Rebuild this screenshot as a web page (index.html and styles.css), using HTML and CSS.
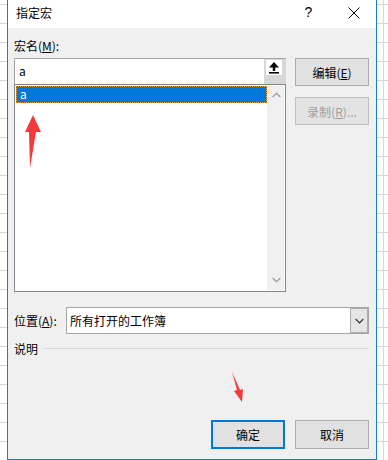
FILE: index.html
```html
<!DOCTYPE html>
<html lang="zh-CN">
<head>
  <meta charset="UTF-8">
  <meta name="viewport" content="width=device-width, initial-scale=1">
  <title>指定宏</title>
  <link rel="stylesheet" href="styles.css">
</head>
<body>
  <div class="dialog">
    <div class="titlebar">
      <span class="title">指定宏</span>
      <span class="tb-btn help">?</span>
      <span class="tb-btn close">
        <svg width="12" height="12" viewBox="0 0 12 12"><path d="M0.5 0.5L11.5 11.5M11.5 0.5L0.5 11.5" stroke="#000" stroke-width="1" fill="none"/></svg>
      </span>
    </div>

    <div class="dialog-body">
      <div class="main">
        <div class="left">
          <div class="label">宏名(<u>M</u>):</div>
          <div class="name-row">
            <div class="name-input">a</div>
            <div class="up-btn">
              <span class="up-box">
                <svg width="16" height="15" viewBox="0 0 16 15">
                  <path d="M8 2L13 7.5H9.2V11H6.8V7.5H3Z" fill="#000"/>
                  <rect x="3" y="12" width="10" height="1.6" fill="#000"/>
                </svg>
              </span>
            </div>
          </div>
          <div class="list">
            <div class="items">
              <div class="item selected">a</div>
            </div>
            <div class="scrollbar">
              <svg width="9" height="6" viewBox="0 0 9 6"><path d="M0.7 5L4.5 1.2L8.3 5" stroke="#a3a3a3" stroke-width="1.4" fill="none"/></svg>
              <svg width="9" height="6" viewBox="0 0 9 6"><path d="M0.7 1L4.5 4.8L8.3 1" stroke="#a3a3a3" stroke-width="1.4" fill="none"/></svg>
            </div>
          </div>
        </div>

        <div class="side">
          <button class="btn">编辑(<u>E</u>)</button>
          <button class="btn disabled">录制(<u>R</u>)...</button>
        </div>
      </div>

      <div class="place-row">
        <span class="place-label">位置(<u>A</u>):</span>
        <div class="select">
          <span class="select-value">所有打开的工作簿</span>
          <span class="select-arrow">
            <svg width="9" height="6" viewBox="0 0 9 6"><path d="M0.7 1L4.5 4.8L8.3 1" stroke="#333" stroke-width="1.2" fill="none"/></svg>
          </span>
        </div>
      </div>

      <div class="desc-row">
        <span>说明</span>
        <span class="rule"></span>
      </div>

      <div class="footer">
        <button class="btn default">确定</button>
        <button class="btn">取消</button>
      </div>
    </div>
  </div>

  <!-- red annotation arrows -->
  <svg class="mark mark-up" width="20" height="56" viewBox="0 0 20 56">
    <path d="M9 0L17 17H12L6 53L5 17H1Z" fill="#f43b3b"/>
  </svg>
  <svg class="mark mark-down" width="16" height="32" viewBox="0 0 16 32">
    <path d="M1 0L6 18L3 19L11 30L12 17L9 18Z" fill="#f43b3b"/>
  </svg>
</body>
</html>
```

FILE: styles.css
```css
* { margin:0; padding:0; box-sizing:border-box; }
body {
  width:388px; height:460px; overflow:hidden; position:relative;
  font-family:"Noto Sans CJK SC", "Liberation Sans", sans-serif;
  font-size:12px; color:#000;
  background:
    linear-gradient(to right, transparent 383px, #d6d6d6 383px, #d6d6d6 384px, transparent 384px),
    repeating-linear-gradient(to bottom, transparent 0, transparent 4px, #d6d6d6 4px, #d6d6d6 5px, transparent 5px, transparent 19px),
    #fff;
}
u { text-decoration:underline; text-underline-offset:1px; }

.dialog {
  margin-left:7px; width:370px; height:460px;
  border:1px solid #1f7bd3; border-top:none;
  background:#f0f0f0;
  display:flex; flex-direction:column;
}
.titlebar {
  height:28px; background:#fff;
  display:flex; align-items:center;
  padding-left:8px;
}
.title { flex:1; line-height:14px; margin-top:-3px; }
.tb-btn {
  width:45px; height:28px;
  display:flex; align-items:center; justify-content:center;
}
.help { font-size:14px; font-family:"Liberation Sans", sans-serif; padding-bottom:4px; }
.close { padding-bottom:3px; }

.dialog-body {
  flex:1; padding:0 7px 10px 6px;
  display:flex; flex-direction:column;
}
.main { display:grid; grid-template-columns:272px 74px; gap:9px; }

.label { line-height:14px; padding-top:11px; height:30px; }
.name-row { display:flex; height:26px; border-top:1px solid #a5a5a5; border-left:1px solid #a5a5a5; }
.name-input { flex:1; background:#fff; padding:4px 0 0 4px; line-height:16px; }
.up-btn { width:22px; background:#d7d7d7; padding:1px 0 0 2px; }
.up-box { display:block; width:16px; height:15px; background:#fff; }
.up-box svg { display:block; }

.list {
  height:208px; border:1px solid #828790; background:#fff;
  padding:1px; display:flex;
}
.items { flex:1; }
.item { height:17px; line-height:16px; padding-left:4px; }
.item.selected {
  background:#0078d7; color:#fff;
  outline:1px dotted #e8a04a; outline-offset:-1px;
}
.scrollbar {
  width:17px; background:#f0f0f0;
  display:flex; flex-direction:column; justify-content:space-between; align-items:center;
  padding:6px 0 7px 1px;
}
.scrollbar svg { display:block; }

.side { display:flex; flex-direction:column; gap:11px; padding-top:30px; }
.btn {
  font:inherit; color:#000;
  height:28px; width:74px;
  background:#e1e1e1; border:1px solid #adadad;
}
.btn.disabled { color:#a0a0a0; border-color:#bfbfbf; background:#e3e3e3; }
.btn.default { border:2px solid #0078d7; }

.place-row { display:flex; align-items:center; margin-top:15px; height:27px; }
.place-label { width:52px; }
.select {
  flex:1; height:27px; display:flex;
  border:1px solid #a5a5a5; background:#fff;
}
.select-value { flex:1; padding:5px 0 0 3px; line-height:16px; }
.select-arrow {
  width:18px; background:#e5e5e5; border:1px solid #adadad;
  display:flex; align-items:center; justify-content:center;
}

.desc-row { display:flex; align-items:center; margin-top:7px; height:14px; }
.rule { flex:1; height:1px; background:#dadada; margin-left:5px; }

.footer { margin-top:auto; display:flex; justify-content:flex-end; gap:10px; }
.footer .btn { height:29px; }

.mark { position:absolute; }
.mark-up { left:24px; top:115px; }
.mark-down { left:231px; top:372px; }
```
